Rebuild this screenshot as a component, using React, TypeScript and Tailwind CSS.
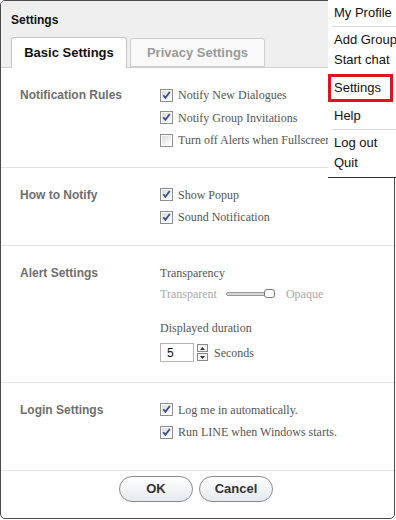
import React from 'react'

const serif = { fontFamily: '"Liberation Serif", "Times New Roman", serif' }

// small classic windows-ish checkbox
const Check = ({ on }: { on: boolean }) => (
  <svg width="13" height="13" viewBox="0 0 13 13" className="shrink-0">
    <defs>
      <linearGradient id="cbg" x1="0" y1="0" x2="1" y2="1">
        <stop offset="0" stopColor="#dcdcdc" />
        <stop offset="1" stopColor="#ffffff" />
      </linearGradient>
    </defs>
    <rect x="0.5" y="0.5" width="12" height="12" fill="#fff" stroke="#8e8f8f" />
    <rect x="2" y="2" width="9" height="9" fill="url(#cbg)" />
    {on && (
      <path d="M3.3 6.2 L5.4 8.8 L9.8 3" fill="none" stroke="#3a4a96" strokeWidth="1.8" />
    )}
  </svg>
)

const CheckRow = ({ on, label }: { on: boolean; label: string }) => (
  <div className="flex h-[22.5px] items-center gap-[5px]">
    <Check on={on} />
    <span className="text-[12px] whitespace-nowrap text-[#555]" style={serif}>
      {label}
    </span>
  </div>
)

const Section = ({
  title,
  className,
  children,
}: {
  title: string
  className: string
  children: React.ReactNode
}) => (
  <div className={`flex border-b border-[#e2e2e2] ${className}`}>
    <div className="w-[159px] shrink-0 pl-[19px] text-[12px] leading-[22px] font-bold text-[#6e6e6e]">{title}</div>
    <div className="flex flex-col">{children}</div>
  </div>
)

const menu = ['My Profile', '-', 'Add Group', 'Start chat', 'Settings', 'Help', '-', 'Log out', 'Quit']

export default function App() {
  return (
    <div
      className="relative h-[520px] w-[396px] overflow-hidden bg-white"
      style={{ fontFamily: '"Liberation Sans", Arial, sans-serif' }}
    >
      <div className="flex h-[519px] w-[395px] flex-col overflow-hidden rounded-[5px] border border-[#4a4a4a] bg-white">
        {/* header + tabs */}
        <div className="h-[67px] shrink-0 border-b border-[#cfcfcf] bg-[#efefef] pl-[10px]">
          <div className="pt-[12px] text-[12px] leading-[14px] font-bold text-[#111]">Settings</div>
          <div className="mt-[10px] flex items-end gap-[3px]">
            <div className="-mb-px flex h-[31px] w-[116px] items-center justify-center rounded-t-[3px] border border-b-0 border-[#c4c4c4] bg-white text-[13px] font-bold text-[#111]">
              Basic Settings
            </div>
            <div className="flex h-[29px] w-[135px] items-center justify-center rounded-t-[3px] border border-[#cfcfcf] bg-[#f9f9f9] text-[13px] font-bold text-[#9a9a9a]">
              Privacy Settings
            </div>
          </div>
        </div>

        <Section title="Notification Rules" className="pt-[16px] pb-[15px]">
          <CheckRow on label="Notify New Dialogues" />
          <CheckRow on label="Notify Group Invitations" />
          <CheckRow on={false} label="Turn off Alerts when Fullscreen" />
        </Section>

        <Section title="How to Notify" className="pt-[16px] pb-[16px]">
          <CheckRow on label="Show Popup" />
          <CheckRow on label="Sound Notification" />
        </Section>

        <Section title="Alert Settings" className="pt-[16px] pb-[18px]">
          <div className="h-[22px] text-[12px] leading-[22px] text-[#555]" style={serif}>
            Transparency
          </div>
          <div className="flex h-[20px] items-center text-[12px] text-[#a8a8a8]" style={serif}>
            <span>Transparent</span>
            <div className="ml-[9px] flex items-center">
              <div className="h-[4px] w-[40px] rounded-l-[2px] border border-[#9a9a9a] bg-[#d8d8d8]" />
              <div className="-ml-[2px] h-[9px] w-[11px] rounded-[3px] border border-[#7a7a7a] bg-white" />
            </div>
            <span className="ml-[11px]">Opaque</span>
          </div>
          <div className="mt-[16px] h-[16px] text-[12px] leading-[16px] text-[#555]" style={serif}>
            Displayed duration
          </div>
          <div className="mt-[6px] flex h-[22px] items-center">
            <div className="flex h-[19px] w-[34px] items-center border border-[#b5b5b5] pl-[6px] text-[12px] text-[#111]">
              5
            </div>
            <div className="ml-[3px] flex flex-col gap-[1px]">
              <div className="flex h-[8px] w-[11px] items-center justify-center border border-[#8a8a8a] bg-[#f3f3f3]">
                <svg width="5" height="3" viewBox="0 0 5 3">
                  <path d="M0 3 L2.5 0 L5 3 Z" fill="#333" />
                </svg>
              </div>
              <div className="flex h-[8px] w-[11px] items-center justify-center border border-[#8a8a8a] bg-[#f3f3f3]">
                <svg width="5" height="3" viewBox="0 0 5 3">
                  <path d="M0 0 L2.5 3 L5 0 Z" fill="#333" />
                </svg>
              </div>
            </div>
            <span className="ml-[6px] text-[12px] text-[#555]" style={serif}>
              Seconds
            </span>
          </div>
        </Section>

        <Section title="Login Settings" className="pt-[16px] pb-[26px]">
          <CheckRow on label="Log me in automatically." />
          <CheckRow on label="Run LINE when Windows starts." />
        </Section>

        <div className="flex flex-1 items-start justify-center gap-[6px] pt-[5px] pr-[3px]">
          <button className="h-[26px] w-[74px] rounded-full border border-[#8c8c8c] bg-gradient-to-b from-white to-[#e6e9ee] text-[13px] font-bold text-[#333]">
            OK
          </button>
          <button className="h-[26px] w-[74px] rounded-full border border-[#8c8c8c] bg-gradient-to-b from-white to-[#e6e9ee] text-[13px] font-bold text-[#333]">
            Cancel
          </button>
        </div>
      </div>

      {/* context menu over the window */}
      <div
        className="absolute top-0 right-0 w-[68px] overflow-hidden border-b border-[#333] bg-white pt-[3px] pb-[4px] text-[13px] whitespace-nowrap text-[#111]"
        style={{ fontFamily: '"Liberation Sans", Arial, sans-serif' }}
      >
        {menu.map((m, i) =>
          m === '-' ? (
            <div key={i} className="my-[3px] ml-[4px] border-t border-[#dadada]" />
          ) : m === 'Settings' ? (
            <div key={i} className="my-[4px] h-[28px] w-[65px] border-[3px] border-[#e0141e] pl-[3px] leading-[22px]">
              {m}
            </div>
          ) : (
            <div key={i} className="h-[20px] pl-[6px] leading-[20px]">
              {m}
            </div>
          )
        )}
      </div>
    </div>
  )
}
